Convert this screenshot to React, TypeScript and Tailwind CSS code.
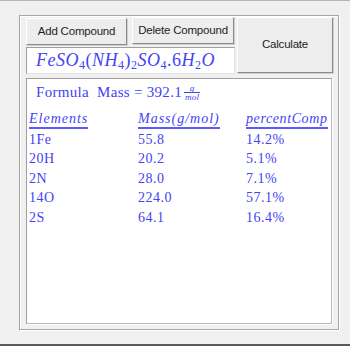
import React from 'react';

const rows = [
  { el: '1Fe', mass: '55.8', pct: '14.2%' },
  { el: '20H', mass: '20.2', pct: '5.1%' },
  { el: '2N', mass: '28.0', pct: '7.1%' },
  { el: '14O', mass: '224.0', pct: '57.1%' },
  { el: '2S', mass: '64.1', pct: '16.4%' },
];

const serif = "font-['Liberation_Serif',serif]";
const ui = "font-['Liberation_Sans',Arial,sans-serif]";

function WinButton({ label, className }: { label: string; className: string }) {
  return (
    <button
      className={`${ui} ${className} bg-[#ededed] text-[11.5px] tracking-[-0.2px] text-[#1e1e1e] border border-t-white border-l-white border-r-[#8a8a8a] border-b-[#8a8a8a] shadow-[1px_1px_0_#d0d0d0] flex items-center justify-center`}
    >
      {label}
    </button>
  );
}

export default function App() {
  return (
    <div className="w-[350px] h-[346px] bg-[#f0f0f0] flex flex-col overflow-hidden">
      <div className="h-px bg-[#b4b4b4]" />
      {/* group box */}
      <div className="ml-[19px] mt-[14px] w-[320px] h-[315px] border border-[#a6a6a6] shadow-[inset_1px_1px_0_#fff,1px_1px_0_#fff] pl-[6px] pt-[1px] flex flex-col">
        <div className="flex">
          <div className="flex flex-col w-[210px]">
            <div className="flex gap-[5px]">
              <WinButton label="Add Compound" className="w-[101px] h-[27px] mt-px" />
              <WinButton label="Delete Compound" className="w-[102px] h-[27px]" />
            </div>
            <div className={`${serif} mt-[2px] w-[209px] h-[27px] bg-white border border-t-[#a0a0a0] border-l-[#a0a0a0] border-r-[#e3e3e3] border-b-[#e3e3e3] text-[#4343f4] text-[18px] pl-[9px] leading-[24px] tracking-[0.5px] whitespace-nowrap`}>
              <i>FeSO</i><sub className="text-[12px]">4</sub>(<i>NH</i><sub className="text-[12px]">4</sub>)<sub className="text-[12px]">2</sub><i>SO</i><sub className="text-[12px]">4</sub>.6<i>H</i><sub className="text-[12px]">2</sub><i>O</i>
            </div>
          </div>
          <WinButton label="Calculate" className="ml-px w-[96px] h-[56px]" />
        </div>
        {/* results */}
        <div className={`${serif} mt-[4px] w-[306px] h-[246px] bg-white border border-t-[#a0a0a0] border-l-[#a0a0a0] border-r-[#b8b8b8] border-b-[#b8b8b8] shadow-[1px_1px_0_#fff] text-[#4343f4] flex flex-col`}>
          <div className="pl-[9px] pt-[1px] h-[26px] flex items-center text-[15px] tracking-[0.3px]">
            <span>Formula&nbsp; Mass = 392.1</span>
            <span className="ml-[2px] flex flex-col items-center italic text-[9px] leading-[8px]">
              <span>g</span>
              <span className="border-t border-[#4343f4] px-px">mol</span>
            </span>
          </div>
          <div className="grid grid-cols-[109px_108px_1fr] pl-[2px] mt-[4px] text-[14px] leading-[19.5px]">
            <div className="pb-[1px]">
              <span className="italic tracking-[1px] border-b-2 border-[#5a5aff] pb-[1px]">Elements</span>
            </div>
            <div>
              <span className="italic tracking-[1px] border-b-2 border-[#5a5aff] pb-[1px]">Mass(g/mol)</span>
            </div>
            <div>
              <span className="italic tracking-[0.6px] border-b-2 border-[#5a5aff] pb-[1px]">percentComp</span>
            </div>
            {rows.map(r => (
              <React.Fragment key={r.el}>
                <div className="tracking-[0.5px]">{r.el}</div>
                <div className="tracking-[0.5px]">{r.mass}</div>
                <div className="tracking-[0.5px]">{r.pct}</div>
              </React.Fragment>
            ))}
          </div>
        </div>
      </div>
      <div className="flex-1" />
      <div className="h-[2px] bg-[#5a5a5a]" />
    </div>
  );
}
